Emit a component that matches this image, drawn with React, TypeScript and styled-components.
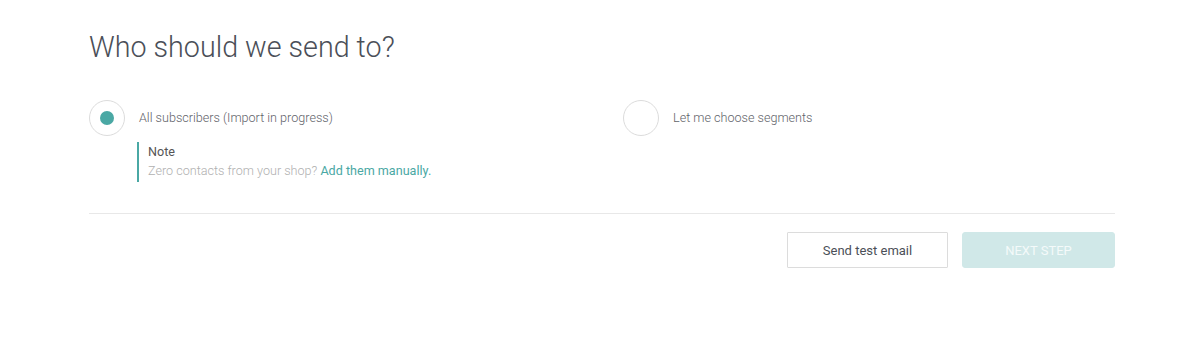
import React, { useState } from "react"
import styled, { createGlobalStyle } from "styled-components"

const GlobalStyle = createGlobalStyle`
  body {
    margin: 0;
    background: #fff;
    font-family: Roboto, "Liberation Sans", sans-serif;
  }
`

const StyledPage = styled.div`
  width: 1026px;
  padding: 28px 0 0 89px;
`

const StyledTitle = styled.h2`
  margin: 0 0 34px;
  font-size: 28.7px;
  font-weight: 300;
  line-height: 38px;
  color: #4b4f58;
`

const StyledOptions = styled.div`
  display: grid;
  grid-template-columns: 534px 1fr;
  padding-bottom: 31px;
  border-bottom: 1px solid #e8e8e8;
`

const StyledOption = styled.label`
  display: flex;
  align-items: center;
  gap: 14px;
  cursor: pointer;
  font-size: 12.6px;
  font-weight: 300;
  line-height: 14px;
  color: #5f636a;
`

const StyledRadio = styled.span<{ checked: boolean }>`
  display: flex;
  align-items: center;
  justify-content: center;
  width: 34px;
  height: 34px;
  border: 1px solid #dcdcdc;
  border-radius: 50%;

  &:after {
    content: '';
    width: 14px;
    height: 14px;
    border-radius: 50%;
    background: ${({ checked }) => (checked ? "#4aa8a4" : "transparent")};
  }
`

const StyledNote = styled.div`
  margin: 6px 0 0 48px;
  padding: 0 0 2px 9px;
  border-left: 2px solid #4aa8a4;
  font-size: 12.6px;
  line-height: 19px;
`

const StyledNoteTitle = styled.div`
  color: #555;
`

const StyledNoteText = styled.div`
  color: #b0b0b0;
  font-weight: 300;

  a {
    color: #4aa8a4;
    font-weight: 400;
    text-decoration: none;
  }
`

const StyledFooter = styled.div`
  display: flex;
  justify-content: flex-end;
  gap: 14px;
  padding-top: 18px;
`

const StyledButton = styled.button<{ primary?: boolean }>`
  height: 36px;
  padding: 0;
  width: ${({ primary }) => (primary ? "153px" : "161px")};
  border: 1px solid ${({ primary }) => (primary ? "#d0e8e8" : "#dcdcdc")};
  border-radius: ${({ primary }) => (primary ? "3px" : "1px")};
  background: ${({ primary }) => (primary ? "#d0e8e8" : "#fff")};
  color: ${({ primary }) => (primary ? "#f4fafa" : "#4b4f58")};
  font-family: Roboto, "Liberation Sans", sans-serif;
  font-size: 13px;
  text-transform: ${({ primary }) => (primary ? "uppercase" : "none")};
  cursor: pointer;
`

const App: React.FC = () => {
  const [choice, setChoice] = useState("all")

  return (
    <StyledPage>
      <GlobalStyle />
      <StyledTitle>Who should we send to?</StyledTitle>
      <StyledOptions>
        <div>
          <StyledOption onClick={() => setChoice("all")}>
            <StyledRadio checked={choice === "all"} />
            All subscribers (Import in progress)
          </StyledOption>
          <StyledNote>
            <StyledNoteTitle>Note</StyledNoteTitle>
            <StyledNoteText>
              Zero contacts from your shop? <a href="#">Add them manually.</a>
            </StyledNoteText>
          </StyledNote>
        </div>
        <div>
          <StyledOption onClick={() => setChoice("segments")}>
            <StyledRadio checked={choice === "segments"} />
            Let me choose segments
          </StyledOption>
        </div>
      </StyledOptions>
      <StyledFooter>
        <StyledButton>Send test email</StyledButton>
        <StyledButton primary disabled>Next step</StyledButton>
      </StyledFooter>
    </StyledPage>
  )
}

export default App
